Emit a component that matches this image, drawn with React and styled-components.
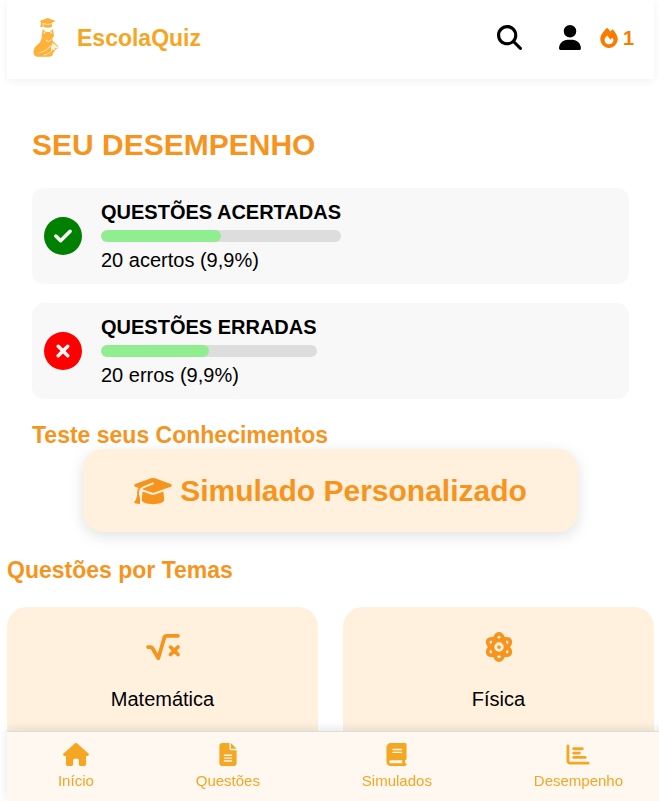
import React from "react";
import styled, { createGlobalStyle } from "styled-components";
import {
  FaMagnifyingGlass,
  FaUser,
  FaFire,
  FaCircleCheck,
  FaCircleXmark,
  FaGraduationCap,
  FaSquareRootVariable,
  FaAtom,
  FaHouse,
  FaFileLines,
  FaBook,
  FaChartBar,
} from "react-icons/fa6";

const GlobalStyle = createGlobalStyle`
  *, *::before, *::after { box-sizing: border-box; }
  body {
    margin: 0;
    background: #fff;
    color: #000;
    font-family: "Liberation Sans", Arial, sans-serif;
    font-size: 20px;
    line-height: 24px;
    overflow: hidden;
  }
  h1, h2, h3, p { margin: 0; }
  button { font-family: inherit; }
  svg { display: block; flex-shrink: 0; }
`;

const Page = styled.div`
  height: 100vh;
  overflow: hidden;
  padding: 0 5px 0 7px;
`;

const Glyph = styled.span`
  display: block;
  flex-shrink: 0;

  svg {
    width: ${(p) => p.$width}px;
    height: ${(p) => p.$height}px;
  }
`;

const Header = styled.header`
  display: flex;
  align-items: center;
  justify-content: space-between;
  height: 79px;
  padding: 0 20px 4px 26px;
  background: #fff;
  box-shadow: 0 2px 8px rgba(0, 0, 0, 0.06);
`;

const Brand = styled.a`
  display: flex;
  align-items: center;
  gap: 18px;
  color: #f5a623;
  font-size: 23px;
  font-weight: bold;
  text-decoration: none;
`;

const Actions = styled.div`
  display: flex;
  align-items: center;
`;

const IconButton = styled.button`
  display: flex;
  margin: 0;
  margin-right: ${(p) => p.$after}px;
  padding: 0;
  border: 0;
  background: none;
  color: #000;
  cursor: pointer;
`;

const Streak = styled.span`
  display: flex;
  align-items: center;
  gap: 5px;
  color: #f97c00;
  font-weight: bold;
`;

const Performance = styled.section`
  display: flex;
  flex-direction: column;
  padding: 48px 25px 0;
`;

const PageTitle = styled.h1`
  margin-bottom: 25px;
  color: #f7941d;
  font-size: 30px;
  line-height: 36px;
`;

const ScoreList = styled.div`
  display: grid;
  gap: 19px;
`;

const ScoreCard = styled.article`
  display: flex;
  align-items: center;
  gap: 19px;
  padding: 12px;
  border-radius: 12px;
  background: #f8f8f8;
`;

const ScoreIcon = styled(Glyph)`
  color: ${(p) => p.$color};
`;

const ScoreTitle = styled.h3`
  font-size: 20px;
  line-height: 24px;
`;

const Track = styled.div`
  height: 12px;
  margin: 6px 0;
  border-radius: 6px;
  background: #ddd;
  overflow: hidden;
`;

const Fill = styled.div`
  height: 100%;
  border-radius: 6px;
  background: #90ee90;
`;

const SectionTitle = styled.h2`
  color: #f7941d;
  font-size: 23px;
  line-height: 28px;
`;

const Practice = styled.section`
  padding: 22px 25px 24px;
`;

const PracticeButton = styled.button`
  display: flex;
  align-items: center;
  gap: 8px;
  margin: 0 auto;
  padding: 24px 51px;
  border: 0;
  border-radius: 20px;
  background: #fff1de;
  box-shadow: 0 4px 15px rgba(0, 0, 0, 0.12);
  color: #f7941d;
  font-size: 30px;
  font-weight: bold;
  line-height: 35px;
  cursor: pointer;
`;

const ThemeGrid = styled.div`
  display: grid;
  grid-template-columns: 1fr 1fr;
  gap: 25px;
  margin-top: 23px;
`;

const ThemeCard = styled.button`
  display: flex;
  flex-direction: column;
  align-items: center;
  gap: 25px;
  padding: 25px 25px 50px;
  border: 0;
  border-radius: 20px;
  background: #fff1de;
  color: #000;
  font-size: 20px;
  line-height: 24px;
  cursor: pointer;

  ${Glyph} {
    color: #f7941d;
  }
`;

const BottomNav = styled.nav`
  position: fixed;
  right: -15px;
  bottom: 0;
  left: 7px;
  display: flex;
  justify-content: space-around;
  height: 70px;
  padding-top: 11px;
  border-top: 1px solid #ddd;
  background: #fff8f0;
  box-shadow: 0 -2px 10px rgba(0, 0, 0, 0.1);
`;

const NavLink = styled.a`
  display: flex;
  flex-direction: column;
  align-items: center;
  gap: 5px;
  color: #f5a623;
  font-size: 15px;
  line-height: 20px;
  text-decoration: none;
`;

function FoxLogo() {
  return (
    <svg width="26" height="39" viewBox="38 22 78 117" aria-hidden="true">
      <g fill="#fdb138">
        <path d="M58 31 82 22 106 31 95 36V48Q82 54 69 48V37L66 36 68 49H60L62 34Z" />
        <path d="M67 55 77 64H88L98 55 101 76 95 84 84 92 72 86 64 78Z" />
        <path d="M64 78 82 92 96 84C96 94 104 96 110 103L115 112C106 113 103 124 96 129L98 133Q94 138 84 138H50C38 136 38 124 42 113C47 102 64 98 64 78Z" />
      </g>
      <path
        d="M94 96C100 98 106 100 110 107L115 112 104 113 102 120 97 116 93 124 91 106 96 104Z"
        fill="#fff"
        opacity="0.85"
      />
      <path
        d="M90 104Q86 118 54 128M92 122Q86 131 70 134M76 89 84 93 92 88"
        fill="none"
        stroke="#fff"
        strokeWidth="2"
      />
      <path d="m70 61 6 6-5 2Zm25 0-6 6 5 2Z" fill="#fff" />
      <path
        d="M71 38Q82 44 94 38M97 97Q106 100 113 108"
        fill="none"
        stroke="#fdb138"
        strokeWidth="2"
      />
      <path d="M70 39Q82 44 95 39" fill="none" stroke="#fff" strokeWidth="2" />
    </svg>
  );
}

const scores = [
  { title: "QUESTÕES ACERTADAS", text: "20 acertos (9,9%)", Icon: FaCircleCheck, color: "#008000", fill: 50 },
  { title: "QUESTÕES ERRADAS", text: "20 erros (9,9%)", Icon: FaCircleXmark, color: "#ff0000", fill: 50 },
];

const themes = [
  { label: "Matemática", Icon: FaSquareRootVariable, width: 34 },
  { label: "Física", Icon: FaAtom, width: 30 },
];

const navItems = [
  { label: "Início", Icon: FaHouse, width: 26 },
  { label: "Questões", Icon: FaFileLines, width: 18 },
  { label: "Simulados", Icon: FaBook, width: 21 },
  { label: "Desempenho", Icon: FaChartBar, width: 24 },
];

export default function App() {
  return (
    <>
      <GlobalStyle />
      <Page>
        <Header>
          <Brand href="#">
            <FoxLogo />
            EscolaQuiz
          </Brand>
          <Actions>
            <IconButton type="button" aria-label="Buscar" $after={37}>
              <Glyph $width={25} $height={25}>
                <FaMagnifyingGlass />
              </Glyph>
            </IconButton>
            <IconButton type="button" aria-label="Perfil" $after={19}>
              <Glyph $width={22} $height={25}>
                <FaUser />
              </Glyph>
            </IconButton>
            <Streak>
              <Glyph $width={18} $height={20}>
                <FaFire />
              </Glyph>
              1
            </Streak>
          </Actions>
        </Header>

        <main>
          <Performance>
            <PageTitle>SEU DESEMPENHO</PageTitle>
            <ScoreList>
              {scores.map(({ title, text, Icon, color, fill }) => (
                <ScoreCard key={title}>
                  <ScoreIcon $color={color} $width={38} $height={38}>
                    <Icon />
                  </ScoreIcon>
                  <div>
                    <ScoreTitle>{title}</ScoreTitle>
                    <Track>
                      <Fill style={{ width: `${fill}%` }} />
                    </Track>
                    <p>{text}</p>
                  </div>
                </ScoreCard>
              ))}
            </ScoreList>
          </Performance>

          <Practice>
            <SectionTitle>Teste seus Conhecimentos</SectionTitle>
            <PracticeButton type="button">
              <Glyph $width={38} $height={30}>
                <FaGraduationCap />
              </Glyph>
              Simulado Personalizado
            </PracticeButton>
          </Practice>

          <section>
            <SectionTitle>Questões por Temas</SectionTitle>
            <ThemeGrid>
              {themes.map(({ label, Icon, width }) => (
                <ThemeCard type="button" key={label}>
                  <Glyph $width={width} $height={30}>
                    <Icon />
                  </Glyph>
                  {label}
                </ThemeCard>
              ))}
            </ThemeGrid>
          </section>
        </main>
      </Page>

      <BottomNav>
        {navItems.map(({ label, Icon, width }) => (
          <NavLink href="#" key={label}>
            <Glyph $width={width} $height={23}>
              <Icon />
            </Glyph>
            {label}
          </NavLink>
        ))}
      </BottomNav>
    </>
  );
}
